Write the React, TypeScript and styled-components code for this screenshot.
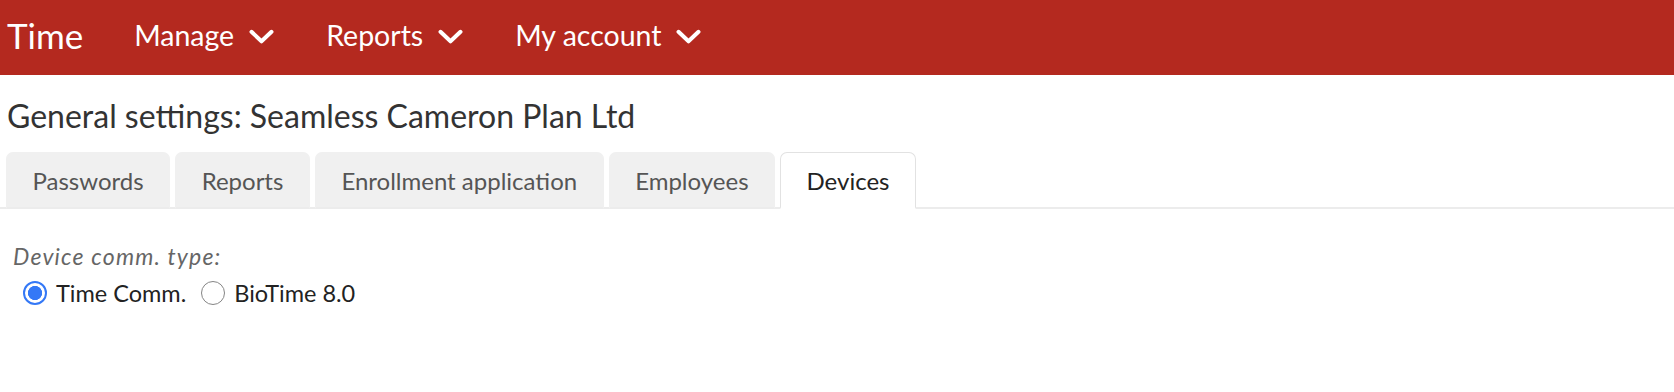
import React, { useState } from "react"
import styled, { createGlobalStyle } from "styled-components"

const GlobalStyle = createGlobalStyle`
  html, body {
    margin: 0;
    padding: 0;
    background: #fff;
    font-family: Lato, "Open Sans", sans-serif;
  }
`

const TopBar = styled.header`
  display: flex;
  align-items: center;
  height: 75px;
  box-sizing: border-box;
  padding: 0 0 6px 7px;
  background: #b4291f;
  color: #fff;
`

const Brand = styled.div`
  font-size: 35px;
  margin-right: 51px;
`

const NavItem = styled.div`
  display: flex;
  align-items: center;
  font-size: 28.5px;
  margin-right: 52px;
  cursor: pointer;
  svg {
    margin-left: 15px;
    margin-top: 5px;
  }
`

const Page = styled.main`
  padding-top: 21px;
`

const Title = styled.h1`
  margin: 0 0 0 7px;
  font-size: 32px;
  font-weight: 400;
  color: #333;
  line-height: 40px;
`

const TabBar = styled.div`
  display: flex;
  gap: 5px;
  margin-top: 16px;
  padding-left: 6px;
  border-bottom: 2px solid #ececec;
`

const Tab = styled.div<{ $active?: boolean }>`
  height: 57px;
  display: flex;
  align-items: center;
  padding: 0 25.5px;
  font-size: 24px;
  border-radius: 7px 7px 0 0;
  box-sizing: border-box;
  margin-bottom: -2px;
  color: ${(p) => (p.$active ? "#222" : "#555")};
  background: ${(p) => (p.$active ? "#fff" : "#f0f0f0")};
  border: 1.5px solid ${(p) => (p.$active ? "#e2e2e2" : "#f0f0f0")};
  border-bottom: 2px solid ${(p) => (p.$active ? "#fff" : "#ececec")};
`

const Section = styled.section`
  padding: 33px 0 0 13px;
`

const FieldLabel = styled.div`
  font-size: 23px;
  font-style: italic;
  letter-spacing: 1.2px;
  color: #666;
  line-height: 28px;
`

const RadioRow = styled.div`
  display: flex;
  align-items: center;
  margin-top: 8px;
  padding-left: 10px;
  line-height: 30px;
`

const RadioLabel = styled.label`
  display: flex;
  align-items: center;
  font-size: 23.5px;
  color: #222;
  margin-right: 15px;
  cursor: pointer;
`

const RadioInput = styled.input`
  appearance: none;
  width: 24px;
  height: 24px;
  margin: 0 9px 0 0;
  border-radius: 50%;
  border: 1.5px solid #858585;
  box-sizing: border-box;
  background: #fff;
  &:checked {
    border: 2.7px solid #3478f6;
    background: radial-gradient(circle, #3478f6 0 6.8px, #fff 7.4px);
  }
`

const Chevron = () => (
  <svg width="25" height="16" viewBox="0 0 25 16" fill="none">
    <path d="M2.5 2.8 L12.5 12.3 L22.5 2.8" stroke="#fff" strokeWidth="4" strokeLinecap="round" strokeLinejoin="round" />
  </svg>
)

const tabs = ["Passwords", "Reports", "Enrollment application", "Employees", "Devices"]

const App: React.FC = () => {
  const [comm, setComm] = useState("time")
  return (
    <>
      <GlobalStyle />
      <TopBar>
        <Brand>Time</Brand>
        {["Manage", "Reports", "My account"].map((item) => (
          <NavItem key={item}>
            {item}
            <Chevron />
          </NavItem>
        ))}
      </TopBar>
      <Page>
        <Title>General settings: Seamless Cameron Plan Ltd</Title>
        <TabBar>
          {tabs.map((t) => (
            <Tab key={t} $active={t === "Devices"}>
              {t}
            </Tab>
          ))}
        </TabBar>
        <Section>
          <FieldLabel>Device comm. type:</FieldLabel>
          <RadioRow>
            <RadioLabel>
              <RadioInput type="radio" name="comm" checked={comm === "time"} onChange={() => setComm("time")} />
              Time Comm.
            </RadioLabel>
            <RadioLabel>
              <RadioInput type="radio" name="comm" checked={comm === "bio"} onChange={() => setComm("bio")} />
              BioTime 8.0
            </RadioLabel>
          </RadioRow>
        </Section>
      </Page>
    </>
  )
}

export default App
